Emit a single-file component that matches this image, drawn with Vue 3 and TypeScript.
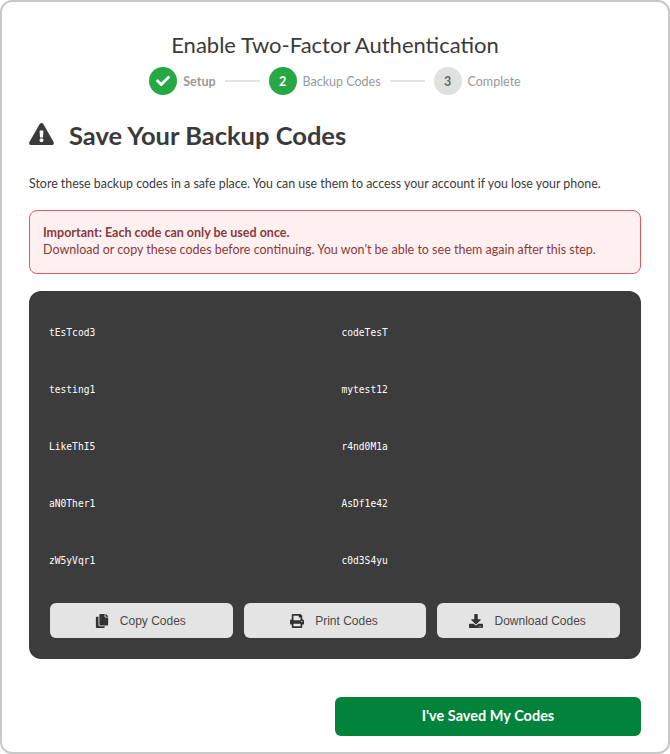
<script setup lang="ts">
const codes: string[] = ['tEsTcod3','codeTesT','testing1','mytest12','LikeThI5','r4nd0M1a','aN0Ther1','AsDf1e42','zW5yVqr1','c0d3S4yu']
const icon = {
  copy: { vb: '0 0 448 512', d: 'M320 448v40c0 13.255-10.745 24-24 24H24c-13.255 0-24-10.745-24-24V120c0-13.255 10.745-24 24-24h72v296c0 30.879 25.121 56 56 56h168zm0-344V0H152c-13.255 0-24 10.745-24 24v368c0 13.255 10.745 24 24 24h272c13.255 0 24-10.745 24-24V128H344c-13.2 0-24-10.8-24-24zm120.971-31.029L375.029 7.029A24 24 0 0 0 358.059 0H352v96h96v-6.059a24 24 0 0 0-7.029-16.97z' },
  print: { vb: '0 0 512 512', d: 'M448 192V77.25c0-8.49-3.37-16.62-9.37-22.63L393.37 9.37c-6-6-14.14-9.37-22.63-9.37H96C78.33 0 64 14.33 64 32v160c-35.35 0-64 28.65-64 64v112c0 8.84 7.16 16 16 16h48v96c0 17.67 14.33 32 32 32h320c17.67 0 32-14.33 32-32v-96h48c8.84 0 16-7.16 16-16V256c0-35.35-28.65-64-64-64zm-64 256H128v-96h256v96zm0-224H128V64h192v48c0 8.84 7.16 16 16 16h48v96zm48 72c-13.25 0-24-10.75-24-24 0-13.26 10.75-24 24-24s24 10.74 24 24c0 13.25-10.75 24-24 24z' },
  download: { vb: '0 0 512 512', d: 'M216 0h80c13.3 0 24 10.7 24 24v168h87.7c17.8 0 26.7 21.5 14.1 34.1L269.7 378.3c-7.5 7.5-19.8 7.5-27.3 0L90.1 226.1c-12.6-12.6-3.7-34.1 14.1-34.1H192V24c0-13.3 10.7-24 24-24zm296 376v112c0 13.3-10.7 24-24 24H24c-13.3 0-24-10.7-24-24V376c0-13.3 10.7-24 24-24h146.7l49 49c20.1 20.1 52.5 20.1 72.6 0l49-49H488c13.3 0 24 10.7 24 24zm-124 88c0-11-9-20-20-20s-20 9-20 20 9 20 20 20 20-9 20-20zm64 0c0-11-9-20-20-20s-20 9-20 20 9 20 20 20 20-9 20-20z' }
}
const actions = [
  { label: 'Copy Codes', ...icon.copy },
  { label: 'Print Codes', ...icon.print },
  { label: 'Download Codes', ...icon.download }
]
</script>

<template>
  <div class="card">
    <h1 class="title">Enable Two-Factor Authentication</h1>
    <div class="steps">
      <span class="dot done">
        <svg class="check" viewBox="0 0 512 512"><path fill="#fff" d="M173.898 439.404l-166.4-166.4c-9.997-9.997-9.997-26.206 0-36.204l36.203-36.204c9.997-9.998 26.207-9.998 36.204 0L192 312.69 432.095 72.596c9.997-9.997 26.207-9.997 36.204 0l36.203 36.204c9.997 9.997 9.997 26.206 0 36.204l-294.4 294.401c-9.998 9.997-26.207 9.997-36.204-.001z"/></svg>
      </span>
      <span class="step-label strong">Setup</span>
      <span class="line"></span>
      <span class="dot done">2</span>
      <span class="step-label">Backup Codes</span>
      <span class="line"></span>
      <span class="dot todo">3</span>
      <span class="step-label">Complete</span>
    </div>
    <h2 class="heading">
      <svg class="warn" viewBox="0 0 576 512"><path fill="#3a3a3a" d="M569.517 440.013C587.975 472.007 564.806 512 527.94 512H48.054c-36.937 0-59.999-40.055-41.577-71.987L246.423 23.985c18.467-32.009 64.72-31.951 83.154 0l239.94 416.028zM288 354c-25.405 0-46 20.595-46 46s20.595 46 46 46 46-20.595 46-46-20.595-46-46-46zm-43.673-165.346l7.418 136c.347 6.364 5.609 11.346 11.982 11.346h48.546c6.373 0 11.635-4.982 11.982-11.346l7.418-136c.375-6.874-5.098-12.654-11.982-12.654h-63.383c-6.884 0-12.356 5.78-11.981 12.654z"/></svg>
      <span>Save Your Backup Codes</span>
    </h2>
    <p class="intro">Store these backup codes in a safe place. You can use them to access your account if you lose your phone.</p>
    <div class="alert">
      <strong>Important: Each code can only be used once.</strong>
      <span>Download or copy these codes before continuing. You won't be able to see them again after this step.</span>
    </div>
    <div class="panel">
      <div class="codes">
        <div v-for="c in codes" :key="c" class="code">{{ c }}</div>
      </div>
      <div class="actions">
        <button v-for="a in actions" :key="a.label" class="action" type="button">
          <svg class="action-icon" :viewBox="a.vb"><path fill="#333" :d="a.d"/></svg>
          <span>{{ a.label }}</span>
        </button>
      </div>
    </div>
    <div class="footer">
      <button class="primary" type="button">I've Saved My Codes</button>
    </div>
  </div>
</template>

<style>
html, body { margin: 0; background: #fff; }
</style>

<style scoped>
.card {
  box-sizing: border-box;
  width: 670px;
  height: 754px;
  border: 2px solid #c8c8c8;
  border-radius: 12px;
  padding: 30px 27px 0;
  font-family: Lato, sans-serif;
  color: #3a3a3a;
  background: #fff;
}
.title {
  margin: 0;
  font-size: 22px;
  line-height: 26px;
  font-weight: 400;
  text-align: center;
}
.steps {
  display: flex;
  align-items: center;
  justify-content: center;
  margin-top: 9px;
  height: 28px;
}
.dot {
  box-sizing: border-box;
  width: 28px;
  height: 28px;
  border-radius: 50%;
  display: flex;
  align-items: center;
  justify-content: center;
  font-size: 12.5px;
  font-weight: 700;
}
.done { background: #28a745; color: #fff; }
.todo { background: #e0e0e0; color: #666; }
.check { width: 14px; height: 14px; }
.step-label {
  margin-left: 6px;
  font-size: 12.5px;
  color: #999;
}
.strong { font-weight: 700; }
.line {
  width: 35px;
  height: 2px;
  background: #e4e4e4;
  margin: 0 9px;
}
.heading {
  display: flex;
  align-items: center;
  gap: 15px;
  margin: 24px 0 0;
  font-size: 25.5px;
  line-height: 32px;
  font-weight: 700;
}
.warn { width: 25px; height: 22px; margin-bottom: 3px; }
.intro {
  margin: 24px 0 0;
  font-size: 12.4px;
  line-height: 18px;
}
.alert {
  box-sizing: border-box;
  display: flex;
  flex-direction: column;
  height: 64px;
  margin-top: 17px;
  padding: 13px 13px 0;
  border: 1px solid #e05a5f;
  border-radius: 8px;
  background: #fff0f0;
  color: #8a3a3e;
  font-size: 12.5px;
  line-height: 17px;
}
.panel {
  box-sizing: border-box;
  height: 368px;
  margin-top: 17px;
  padding: 13px 21px 21px;
  border-radius: 12px;
  background: #3c3c3c;
}
.codes {
  display: grid;
  grid-template-columns: 1fr 1fr;
  column-gap: 15px;
  grid-auto-rows: 57px;
}
.code {
  display: flex;
  align-items: center;
  margin-left: -1px;
  color: #fff;
  font-family: "DejaVu Sans Mono", monospace;
  font-size: 9.6px;
}
.actions {
  display: grid;
  grid-template-columns: repeat(3, 1fr);
  gap: 11px;
  margin-top: 14px;
}
.action {
  display: flex;
  align-items: center;
  justify-content: center;
  gap: 11px;
  height: 35px;
  padding: 0 2px 0 0;
  border: 0;
  border-radius: 6px;
  background: #e4e4e4;
  color: #4a4a4a;
  font-family: "Liberation Sans", Arial, sans-serif;
  font-size: 12px;
}
.action-icon { width: 14px; height: 14px; }
.footer {
  display: flex;
  justify-content: flex-end;
  margin-top: 38px;
}
.primary {
  width: 306px;
  height: 39px;
  padding: 0 0 2px;
  border: 0;
  border-radius: 6px;
  background: #01833b;
  color: #fff;
  font-family: Lato, sans-serif;
  font-size: 14.5px;
  font-weight: 700;
}
</style>
